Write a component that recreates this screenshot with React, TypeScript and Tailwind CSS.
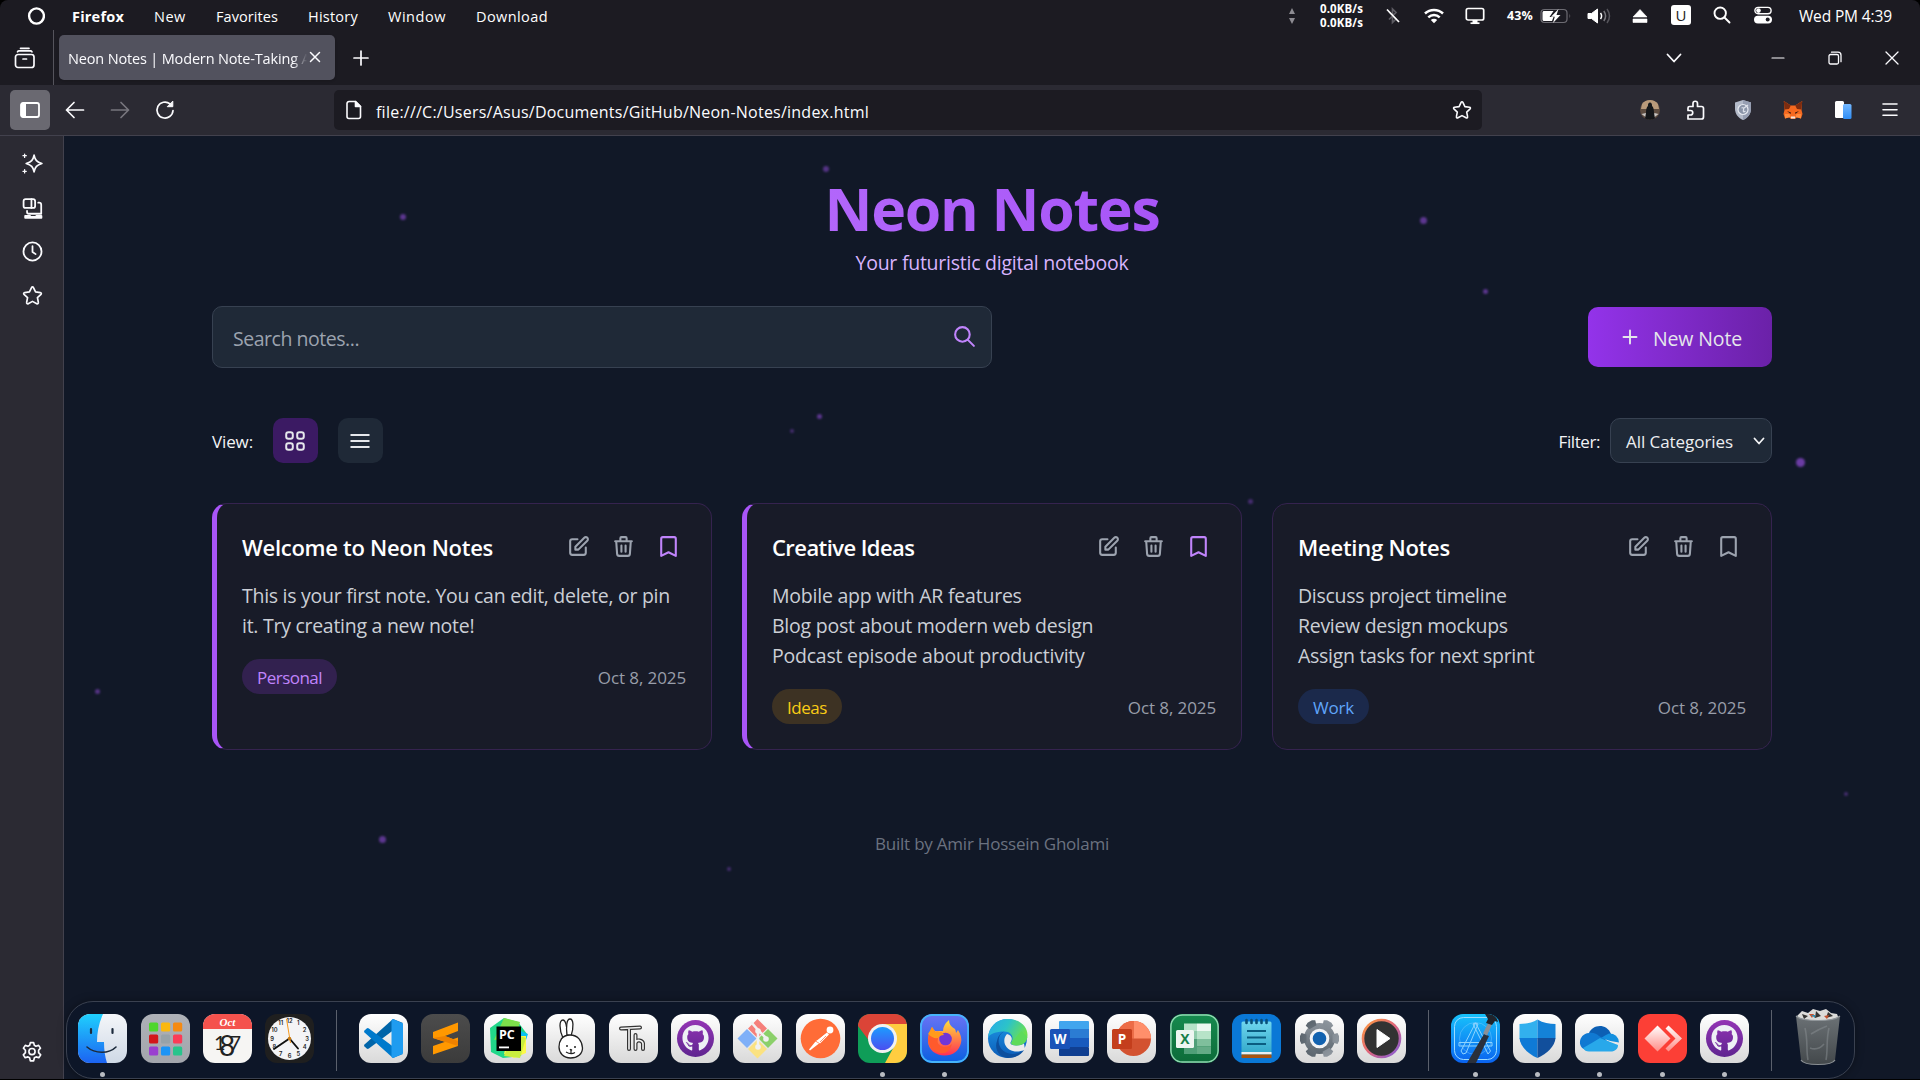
import type { ReactNode } from "react";
import { FaGithub } from "react-icons/fa";

/* ---------- shared icon wrapper ---------- */

function Line({
  children,
  size = 20,
  box = 20,
  width = 1.6,
  className = "",
}: {
  children: ReactNode;
  size?: number;
  box?: number;
  width?: number;
  className?: string;
}) {
  return (
    <svg
      width={size}
      height={size}
      viewBox={`0 0 ${box} ${box}`}
      fill="none"
      stroke="currentColor"
      strokeWidth={width}
      strokeLinecap="round"
      strokeLinejoin="round"
      className={`shrink-0 ${className}`}
    >
      {children}
    </svg>
  );
}

const STAR =
  "M10 1.8c.4 0 .7.2.9.6l2 4.2 4.6.6c.9.1 1.2 1.1.6 1.7l-3.4 3.2.9 4.6c.2.9-.7 1.5-1.5 1.1L10 15.6l-4.1 2.2c-.8.4-1.7-.2-1.5-1.1l.9-4.6L1.9 8.9c-.6-.6-.3-1.6.6-1.7l4.6-.6 2-4.2c.2-.4.5-.6.9-.6z";

/* ---------- system menu bar ---------- */

function MenuBar() {
  return (
    <div className="flex h-[30px] shrink-0 items-center pt-[2px] text-[14.5px] text-white">
      <svg width="18" height="20" viewBox="0 0 18 20" className="-mt-px ml-[27px]">
        <ellipse cx="9.5" cy="10" rx="7.4" ry="7.6" fill="none" stroke="#fff" strokeWidth="2.4" />
      </svg>
      <span className="ml-[27px] w-[82px] pt-px font-bold tracking-[0.015em]">Firefox</span>
      <span className="w-[62px] pt-px tracking-[0.035em]">New</span>
      <span className="w-[92px] pt-px tracking-[0.005em]">Favorites</span>
      <span className="w-[80px] pt-px tracking-[0.016em]">History</span>
      <span className="w-[88px] pt-px tracking-[0.037em]">Window</span>
      <span className="pt-px tracking-[0.028em]">Download</span>

      <div className="ml-auto flex h-full w-[640px] items-center">
        <div className="flex w-[23px] justify-center">
          <svg width="8" height="18" viewBox="0 0 8 18" fill="#8d8c92">
            <path d="M4 1l3 6H1zM4 17l3-6H1z" />
          </svg>
        </div>
        <div className="flex w-[77px] flex-col items-center text-[11.5px] leading-[14px] font-bold tracking-[0.01em]">
          <span>0.0KB/s</span>
          <span>0.0KB/s</span>
        </div>
        <div className="flex w-[26px] justify-center">
          <svg width="16" height="18" viewBox="0 0 16 18" fill="none" strokeWidth="1.7">
            <path d="M4 5l7 7-3.5 3.5V2L11 5.5 4 12.5" stroke="#5c5b62" />
            <path d="M2 2.5l12 12.5" stroke="#fff" />
          </svg>
        </div>
        <div className="flex w-[56px] justify-center">
          <svg width="20" height="16" viewBox="0 0 20 16" fill="none" stroke="#fff" strokeWidth="2.5">
            <path d="M1 5.5a13 13 0 0118 0M4.3 9.3a8.3 8.3 0 0111.4 0" />
            <path d="M10 15.2l-3.2-3.2a4.6 4.6 0 016.4 0z" fill="#fff" stroke="none" />
          </svg>
        </div>
        <div className="flex w-[26px] justify-center">
          <svg width="20" height="18" viewBox="0 0 20 18" fill="none" stroke="#fff" strokeWidth="1.7">
            <rect x="1.3" y="1.5" width="17.4" height="11.5" rx="1.8" />
            <path d="M10 13v3" strokeWidth="5" />
            <path d="M5.5 16.2h9" />
          </svg>
        </div>
        <span className="ml-[19px] text-[12.5px] font-bold tracking-[0.01em]">43%</span>
        <svg width="32" height="18" viewBox="0 0 32 18" className="-mt-px ml-[7px]">
          <rect x="1" y="2.5" width="26" height="13" rx="3.5" fill="none" stroke="#6d6c73" strokeWidth="1.2" />
          <path d="M4.5 4h9L9.5 10h4L12 14H4.5C3 14 2.5 13.5 2.5 12V6c0-1.5.5-2 2-2z" fill="#fff" />
          <path d="M18.5 2L11 9.8h3.8L13 16l7.5-8h-4z" fill="#fff" />
          <path d="M29.5 6.5q1.5 2.5 0 5z" fill="#6d6c73" />
        </svg>
        <svg width="25" height="18" viewBox="0 0 25 18" fill="none" strokeWidth="1.5" className="-mt-px ml-[15px]">
          <path d="M1 6.5h3.5L10.5 2v14l-6-4.5H1z" fill="#fff" stroke="#fff" strokeWidth="1" strokeLinejoin="round" />
          <path d="M13.5 6q2.2 3 0 6" stroke="#fff" />
          <path d="M16.8 4q3.6 5 0 10" stroke="#77767c" />
          <path d="M20 2q5 7 0 14" stroke="#55545b" />
        </svg>
        <svg width="16" height="16" viewBox="0 0 16 16" fill="#fff" className="-mt-px ml-[20px]">
          <path d="M8 1.5l7 7.5H1zM1 11h14v3.5H1z" stroke="#fff" strokeWidth=".6" strokeLinejoin="round" />
        </svg>
        <span className="-mt-[2px] ml-[23px] flex h-5 w-5 items-center justify-center rounded-[3px] bg-white text-[15px] leading-none text-[#1c1b22]">
          U
        </span>
        <Line size={18} box={18} width={1.9} className="-mt-[2px] ml-[22px]">
          <circle cx="7.2" cy="7.2" r="5.7" />
          <path d="M11.5 11.5l5 5" />
        </Line>
        <svg width="18" height="18" viewBox="0 0 18 18" className="-mt-[2px] ml-[23px]">
          <rect x=".9" y="1.4" width="16.2" height="6.4" rx="3.2" fill="none" stroke="#fff" strokeWidth="1.4" />
          <circle cx="4.5" cy="4.6" r="2.3" fill="#fff" />
          <rect x="0" y="9.7" width="18" height="7.8" rx="3.9" fill="#fff" />
          <circle cx="13.7" cy="13.6" r="2" fill="#1c1b22" />
        </svg>
        <span className="ml-[27px] pt-px text-[15.5px] tracking-[-0.009em] whitespace-nowrap">Wed PM 4:39</span>
      </div>
    </div>
  );
}

/* ---------- browser chrome ---------- */

function TabStrip() {
  return (
    <div className="flex h-[55px] shrink-0 items-center text-[#fbfbfe]">
      <div className="flex h-full w-[54px] items-center border-r border-[#55545c] pt-px pl-[14px]">
        <Line size={22} box={22} width={1.7}>
          <rect x="1.5" y="7.5" width="18.5" height="13" rx="2.5" />
          <path d="M3.5 4.8q.5-.9 1.5-.9h11.5q1 0 1.5.9M6.5 1.3h8.5M9 12h3.5" />
        </Line>
      </div>
      <div className="ml-[5px] flex h-[45px] w-[276px] items-center rounded-[5px] bg-[#52525e] pl-[9px] shadow-sm">
        <span className="w-[240px] overflow-hidden mask-[linear-gradient(to_right,#000_225px,transparent_239px)] pt-[2px] text-[14.5px] tracking-[-0.011em] whitespace-nowrap">
          Neon Notes | Modern Note-Taking App
        </span>
        <Line size={12} box={12} width={1.5} className="-mt-px ml-px">
          <path d="M1.5 1.5l9 9M10.5 1.5l-9 9" />
        </Line>
      </div>
      <Line size={16} box={16} width={1.7} className="mt-px ml-[18px]">
        <path d="M8 1v14M1 8h14" />
      </Line>
      <div className="ml-auto flex items-center pr-[21px]">
        <Line size={16} box={16} width={1.8}>
          <path d="M1.5 4.5L8 11.5l6.5-7" />
        </Line>
        <Line size={14} box={14} width={1.2} className="ml-[89px]">
          <path d="M1 7h12" />
        </Line>
        <Line size={14} box={14} width={1.3} className="ml-[43px]">
          <rect x="1" y="3.5" width="9.5" height="9.5" rx="1.5" />
          <path d="M3.5 1.2h6.500q3 0 3 3v6.500" />
        </Line>
        <Line size={14} box={14} width={1.3} className="ml-[43px]">
          <path d="M1 1l12 12M13 1L1 13" />
        </Line>
      </div>
    </div>
  );
}

function Toolbar() {
  return (
    <div className="flex h-[50px] shrink-0 items-center bg-[#2b2a33] text-[#fbfbfe]">
      <div className="ml-[10px] flex h-10 w-10 items-center justify-center rounded-[5px] bg-[#6a6971]">
        <svg width="20" height="16" viewBox="0 0 20 16">
          <rect x="1" y="1" width="18" height="14" rx="2" fill="none" stroke="#fff" strokeWidth="1.8" />
          <path d="M1 1h5v14H1z" fill="#fff" />
        </svg>
      </div>
      <Line size={20} className="ml-[15px]" width={1.7}>
        <path d="M18.500 10h-17M9 2.500L1.500 10 9 17.500" />
      </Line>
      <Line size={20} className="ml-[25px] text-[#77767e]" width={1.7}>
        <path d="M1.500 10h17M11 2.500l7.500 7.500-7.500 7.500" />
      </Line>
      <Line size={20} className="ml-[25px]" width={1.7}>
        <path d="M18 10.500a8 8 0 11-3-6.700" />
        <path d="M17.800 1.500v5.200h-5.200z" fill="currentColor" strokeWidth="1" />
      </Line>

      <div className="ml-[159px] flex h-10 w-[1148px] items-center rounded-[5px] bg-[#1c1b22] pr-[10px] pl-[10px]">
        <Line size={20} width={1.6}>
          <path d="M11.500 1.500H5a2 2 0 00-2 2v13a2 2 0 002 2h9.500a2 2 0 002-2v-10z" />
          <path d="M11.500 1.500v5h5z" fill="currentColor" />
        </Line>
        <span className="ml-[12px] pt-[3px] text-[16px] tracking-[0.0146em]">
          file:///C:/Users/Asus/Documents/GitHub/Neon-Notes/index.html
        </span>
        <Line size={20} width={1.6} className="ml-auto">
          <path d={STAR} />
        </Line>
      </div>

      <div className="ml-auto flex items-center pr-[20px]">
        <svg width="20" height="20" viewBox="0 0 20 20">
          <circle cx="10" cy="10" r="10" fill="#5d4c40" />
          <path d="M2 4a10 10 0 0116 0l1 5H1z" fill="#b99a7a" />
          <path d="M1.500 14L6 13l3 6.500zM18.500 14l-4-1-3 6.500z" fill="#c9c5c2" />
          <path d="M10 2.500c1.700 0 2.200 2 2 3.500 1.500 1 2 4 2 7l1 5.500q-5 2.500-10 0L6 13c0-3 .5-6 2-7-.2-1.500.3-3.500 2-3.500z" fill="#15171a" />
        </svg>
        <Line size={20} width={1.7} className="ml-[26px]">
          <path d="M2 19V15h2.500a2.200 2.200 0 000-4.500H2V8q0-1.500 1.500-1.500H7V3.500a2.200 2.200 0 014.500 0v3h4q2 0 2 2V17q0 2-2 2z" />
        </Line>
        <svg width="20" height="20" viewBox="0 0 20 20" className="ml-[27px]">
          <path d="M10 0l8 2.500V9c0 5-3.500 9-8 11-4.500-2-8-6-8-11V2.500z" fill="#b3bac9" />
          <path d="M10 0l8 2.500V9c0 5-3.500 9-8 11z" fill="#969eb2" />
          <circle cx="10" cy="9.500" r="5" fill="#8a94a8" stroke="#e6e9f0" strokeWidth="1.2" />
          <path d="M8.500 8q3-1 2 2t2 1M10.500 8.500L15 5" fill="none" stroke="#dfe3ec" strokeWidth="1.2" />
        </svg>
        <svg width="20" height="20" viewBox="0 0 20 20" className="ml-[30px]">
          <path d="M.8 1l7 4.500h4.400l7-4.500-.7 9 1 4-1.500 4.500-4-1.200-2.200 1.700H8.200L6 17.300 2 18.500.5 14l1-4z" fill="#f6691f" />
          <path d="M.8 1l7 4.500L6 9 1.500 9.500zM19.200 1l-7 4.500L14 9l4.500.5z" fill="#7c2c10" />
          <path d="M4 11l4 1.500-.5 1.500zM16 11l-4 1.500.5 1.500z" fill="#3a1a10" />
          <path d="M8 16.500h4l.3 2H7.700z" fill="#f1e6dc" />
          <path d="M2 14h4.500l1 3L2 18.500zM18 14h-4.500l-1 3 5.500 1.500z" fill="#ff8a3d" />
        </svg>
        <svg width="20" height="20" viewBox="0 0 20 20" className="ml-[30px]">
          <defs>
            <linearGradient id="pane" x1="0" y1="0" x2="0" y2="1">
              <stop offset="0" stopColor="#74b8ff" />
              <stop offset="1" stopColor="#2f8df5" />
            </linearGradient>
          </defs>
          <rect x="2" y="1" width="9" height="17" rx="1.5" fill="#fff" />
          <rect x="10" y="4" width="8.500" height="15" rx="1.5" fill="url(#pane)" />
        </svg>
        <Line size={20} width={1.6} className="ml-[27px]">
          <path d="M3 4h14M3 9.700h14M3 15.300h14" />
        </Line>
      </div>
    </div>
  );
}

function Sidebar() {
  return (
    <div className="flex w-[63px] shrink-0 flex-col items-center bg-[#2b2a33] pt-[17px] pb-[16px] pl-px text-[#fbfbfe]">
      <Line size={21} width={1.6}>
        <path d="M11.500 2c1 4.800 2.500 6.500 7.500 8-5 1.500-6.500 3.200-7.500 8-1-4.800-2.500-6.500-7.500-8 5-1.500 6.500-3.200 7.500-8z" />
        <path d="M2.500 1v3.200M.9 2.600h3.200M2.500 15.800V19M.9 17.400h3.200" strokeWidth="1.2" />
      </Line>
      <Line size={21} width={1.7} className="mt-[24px]">
        <rect x="1.500" y="1" width="11" height="8.500" rx="2" />
        <path d="M9 1v8.500M15.500 4.500h.800q2 0 2 2v8.500H6.500q-1.700 0-1.700-1.700v-1.100" />
        <path d="M3 18.800h15.500v-1.700h-4.800q-.5 1-1.500 1h-3q-1 0-1.500-1H3z" fill="currentColor" />
      </Line>
      <Line size={21} width={1.7} className="mt-[22px]">
        <circle cx="10" cy="10" r="8.600" />
        <path d="M10 5v5.500l3 2" />
      </Line>
      <Line size={21} width={1.6} className="mt-[23px]">
        <path d={STAR} />
      </Line>
      <Line size={22} width={1.5} className="mt-auto">
        <path d="M8.500 1.500h3l.6 2.400 1.500.8 2.400-.7 1.700 2.500L16 8.400v2.200l1.900 2-1.700 2.600-2.500-.8-1.500.9-.7 2.700h-3l-.7-2.700-1.500-.9-2.500.8-1.700-2.600 1.900-2V8.400L2.200 6.500 3.900 4l2.400.7 1.600-.8z" />
        <circle cx="10" cy="9.600" r="2.800" />
      </Line>
    </div>
  );
}

/* ---------- notes application ---------- */

const PARTICLES: string[] = [
  "left-[759px] top-[30px] size-[6px] opacity-45",
  "left-[336px] top-[78px] size-[6px] opacity-50",
  "left-[1356px] top-[81px] size-[7px] opacity-50",
  "left-[1419px] top-[153px] size-[5px] opacity-50",
  "left-[753px] top-[278px] size-[5px] opacity-50",
  "left-[726px] top-[293px] size-[4px] opacity-35",
  "left-[1732px] top-[322px] size-[9px] opacity-60",
  "left-[1184px] top-[363px] size-[5px] opacity-35",
  "left-[31px] top-[553px] size-[5px] opacity-45",
  "left-[1780px] top-[656px] size-[4px] opacity-35",
  "left-[315px] top-[700px] size-[7px] opacity-50",
  "left-[663px] top-[731px] size-[4px] opacity-35",
];

type Note = {
  title: string;
  titleClass: string;
  lines: string[];
  linesClass: string;
  tag: string;
  tagClass: string;
  pinned: boolean;
};

const NOTES: Note[] = [
  {
    title: "Welcome to Neon Notes",
    titleClass: "tracking-[-0.013em]",
    lines: ["This is your first note. You can edit, delete, or pin", "it. Try creating a new note!"],
    linesClass: "tracking-[-0.014em]",
    tag: "Personal",
    tagClass: "bg-[#32214f] text-[#c084fc] tracking-[-0.031em] w-[95px]",
    pinned: true,
  },
  {
    title: "Creative Ideas",
    titleClass: "tracking-[-0.026em]",
    lines: ["Mobile app with AR features", "Blog post about modern web design", "Podcast episode about productivity"],
    linesClass: "tracking-[-0.0115em]",
    tag: "Ideas",
    tagClass: "bg-[#3d3223] text-[#facc15] tracking-[-0.026em] w-[70px]",
    pinned: true,
  },
  {
    title: "Meeting Notes",
    titleClass: "tracking-[-0.011em]",
    lines: ["Discuss project timeline", "Review design mockups", "Assign tasks for next sprint"],
    linesClass: "tracking-[-0.0152em]",
    tag: "Work",
    tagClass: "bg-[#1b294b] text-[#60a5fa] tracking-[-0.012em] w-[71px]",
    pinned: false,
  },
];

function NoteCard({ note }: { note: Note }) {
  return (
    <article
      className={`h-[247px] rounded-[15px] border border-[#35234f] bg-[#181b28] p-[25px] ${
        note.pinned ? "border-l-[5px] border-l-[#a855f7]" : ""
      }`}
    >
      <div className="flex h-[35px] items-center justify-between">
        <h2 className={`pt-px text-[22px] font-semibold text-white ${note.titleClass}`}>{note.title}</h2>
        <div className="flex gap-[10px] text-[#9ca3af]">
          <button className="p-[5px]">
            <Line size={25} box={24} width={2}>
              <path d="M11 5H6a2 2 0 00-2 2v11a2 2 0 002 2h11a2 2 0 002-2v-5m-1.414-9.414a2 2 0 112.828 2.828L11.828 15H9v-2.828l8.586-8.586z" />
            </Line>
          </button>
          <button className="p-[5px]">
            <Line size={25} box={24} width={2}>
              <path d="M19 7l-.867 12.142A2 2 0 0116.138 21H7.862a2 2 0 01-1.995-1.858L5 7m5 4v6m4-6v6m1-10V4a1 1 0 00-1-1h-4a1 1 0 00-1 1v3M4 7h16" />
            </Line>
          </button>
          <button className={`p-[5px] ${note.pinned ? "text-[#c084fc]" : ""}`}>
            <Line size={25} box={24} width={2}>
              <path d="M5 4.500a1.500 1.500 0 011.500-1.500h11a1.500 1.500 0 011.500 1.500V21l-7-3.500L5 21z" />
            </Line>
          </button>
        </div>
      </div>
      <div className={`mt-[17px] -mb-[2px] text-[19.5px] leading-[30px] whitespace-nowrap text-[#cbcfd6] ${note.linesClass}`}>
        {note.lines.map((line) => (
          <p key={line}>{line}</p>
        ))}
      </div>
      <div className="mt-5 flex items-center justify-between text-[17px]">
        <span className={`flex h-[35px] items-center justify-center rounded-full pt-[3px] ${note.tagClass}`}>{note.tag}</span>
        <span className="pt-[3px] tracking-[-0.006em] text-[#989eaa]">Oct 8, 2025</span>
      </div>
    </article>
  );
}

function NotesApp() {
  return (
    <main className="relative min-w-0 flex-1 overflow-hidden border-l border-[#42414d] bg-[#111827]">
      {PARTICLES.map((place) => (
        <span key={place} className={`absolute rounded-full bg-[#a855f7] blur-[1.2px] ${place}`} />
      ))}
      <div className="mx-auto w-[1560px]">
        <header className="flex flex-col items-center pt-[42px]">
          <h1 className="bg-linear-to-r from-[#b266fb] to-[#a855f7] bg-clip-text text-[59px] leading-[60px] font-bold tracking-[-0.0215em] text-transparent">
            Neon Notes
          </h1>
          <p className="mt-[10px] text-[19.5px] leading-[30px] tracking-[-0.0126em] text-[#d8b4fe]">
            Your futuristic digital notebook
          </p>
        </header>

        <div className="mt-[28px] flex h-[62px] items-center justify-between">
          <div className="flex h-[62px] w-[780px] items-center justify-between rounded-[10px] border border-[#374151] bg-[#1f2937] pr-[14px] pl-[20px]">
            <span className="pt-[4px] text-[19.5px] tracking-[-0.024em] text-[#9ca3af]">Search notes...</span>
            <Line size={25} box={24} width={2} className="-mt-px text-[#c084fc]">
              <path d="M21 21l-6-6m2-5a7 7 0 11-14 0 7 7 0 0114 0z" />
            </Line>
          </div>
          <button className="flex h-[60px] w-[184px] items-center rounded-[10px] bg-linear-to-r from-[#9333ea] to-[#6b21a8] pl-[34px] text-[#e5e7eb]">
            <Line size={16} box={16} width={1.9}>
              <path d="M8 1.500v13M1.500 8h13" />
            </Line>
            <span className="ml-[15px] pt-[4px] text-[19.5px] tracking-[-0.007em]">New Note</span>
          </button>
        </div>

        <div className="mt-[50px] flex h-[45px] items-center text-[17px] text-[#f3f4f6]">
          <span className="w-[61px] pt-[3px] tracking-[-0.007em]">View:</span>
          <button className="flex size-[45px] items-center justify-center rounded-[10px] bg-[#3b1a63]">
            <Line size={20} box={20} width={2} className="-ml-px text-[#e5e7eb]">
              <rect x="1.200" y="1.200" width="6.600" height="6.600" rx="2.200" />
              <rect x="12.200" y="1.200" width="6.600" height="6.600" rx="2.200" />
              <rect x="1.200" y="12.200" width="6.600" height="6.600" rx="2.200" />
              <rect x="12.200" y="12.200" width="6.600" height="6.600" rx="2.200" />
            </Line>
          </button>
          <button className="ml-5 flex size-[45px] items-center justify-center rounded-[10px] bg-[#1f2937]">
            <Line size={20} box={20} width={1.9} className="-ml-px text-[#e5e7eb]">
              <path d="M1.200 4h17.600M1.200 10h17.600M1.200 16h17.600" />
            </Line>
          </button>
          <span className="ml-auto pt-[3px] tracking-[-0.025em]">Filter:</span>
          <div className="ml-[10px] flex h-[45px] w-[162px] items-center justify-between rounded-[10px] border border-[#374151] bg-[#1f2937] pr-[6px] pl-[15px]">
            <span className="pt-[3px] tracking-[-0.003em] text-[#eceef1]">All Categories</span>
            <Line size={12} box={12} width={1.8}>
              <path d="M1.500 3.500L6 8.500l4.500-5" />
            </Line>
          </div>
        </div>

        <section className="mt-10 grid grid-cols-3 gap-[30px]">
          {NOTES.map((n) => (
            <NoteCard key={n.title} note={n} />
          ))}
        </section>

        <footer className="mt-20 pt-px text-center text-[17px] leading-[25px] tracking-[-0.013em] text-[#6b7280]">
          Built by Amir Hossein Gholami
        </footer>
      </div>
    </main>
  );
}

/* ---------- dock ---------- */

function Tile({ bg = "url(#tile)", children }: { bg?: string; children: ReactNode }) {
  return (
    <svg width="49" height="49" viewBox="0 0 49 49" className="overflow-hidden rounded-[12px]">
      <rect width="49" height="49" fill={bg} />
      {children}
    </svg>
  );
}

function Gradients() {
  const defs: [string, string, string][] = [
    ["tile", "#ffffff", "#d9d9d9"],
    ["finder", "#1fd0fd", "#1c63f2"],
    ["face", "#f4f6f9", "#cfd9e6"],
    ["pad", "#aeb1b7", "#a3a6ad"],
    ["chromeBall", "#1c9cff", "#4a4ff0"],
    ["ffBg", "#6b73f5", "#0a5fe0"],
    ["fox", "#ffe03a", "#ff2f55"],
    ["xcode", "#17c2fb", "#0a63f0"],
    ["desk", "#ffffff", "#ff8c86"],
    ["can", "#6b7175", "#43484b"],
    ["excel", "#168a4e", "#0c6b39"],
    ["note", "#6fd6ee", "#2fa6c8"],
    ["gh", "#9334b4", "#5f2590"],
    ["dark", "#4c4c4c", "#3b3b3b"],
    ["edge", "#1f9ae8", "#0b5cb8"],
    ["gear", "#8d959d", "#5c666f"],
  ];
  return (
    <svg width="0" height="0" className="absolute">
      <defs>
        {defs.map(([id, a, b]) => (
          <linearGradient key={id} id={id} x1="0" y1="0" x2="0" y2="1">
            <stop offset="0" stopColor={a} />
            <stop offset="1" stopColor={b} />
          </linearGradient>
        ))}
        <linearGradient id="edgeTop" x1="0" y1="0" x2="1" y2=".4">
          <stop offset="0" stopColor="#28a8ea" />
          <stop offset=".5" stopColor="#2cc3c9" />
          <stop offset="1" stopColor="#6be04e" />
        </linearGradient>
        <linearGradient id="ring" x1="0" y1="0" x2="1" y2="1">
          <stop offset="0" stopColor="#ff9b3d" />
          <stop offset=".5" stopColor="#e0667a" />
          <stop offset="1" stopColor="#7c5be0" />
        </linearGradient>
      </defs>
    </svg>
  );
}

function Finder() {
  return (
    <Tile bg="url(#face)">
      <path d="M0 0h25c-4 9-6 18-6 28h7c0 8 1 15 3 21H0z" fill="url(#finder)" />
      <path d="M13 15v4M34.500 15v4" stroke="#1d2b3c" strokeWidth="2.2" strokeLinecap="round" />
      <path d="M9 33c8 7 22 7 29 0" fill="none" stroke="#1d2b3c" strokeWidth="1.6" strokeLinecap="round" />
    </Tile>
  );
}

const PAD_COLORS = ["#4fd62c", "#fbb80f", "#f58a12", "#d3171b", "#98a2a8", "#fb3b57", "#9a3fd0", "#1c94f5", "#28c48c"];

function Launchpad() {
  return (
    <Tile bg="url(#pad)">
      {PAD_COLORS.map((c, i) => (
        <rect key={c} x={8 + (i % 3) * 12} y={8.5 + Math.floor(i / 3) * 12} width="9.2" height="9" rx="1.5" fill={c} />
      ))}
    </Tile>
  );
}

function Calendar() {
  return (
    <Tile bg="#f6f5f3">
      <rect width="49" height="15" fill="#f4524d" />
      <text x="24.5" y="11.5" textAnchor="middle" fontFamily="Liberation Serif" fontStyle="italic" fontWeight="700" fontSize="11" fill="#fff">
        Oct
      </text>
      <text x="11" y="36" fontFamily="Lato" fontSize="20" fill="#222" textLength="27">
        17
      </text>
      <text x="24" y="42" textAnchor="middle" fontFamily="Lato" fontSize="28" fill="#222">
        8
      </text>
    </Tile>
  );
}

function Clock() {
  const hours = [12, 1, 2, 3, 4, 5, 6, 7, 8, 9, 10, 11];
  return (
    <Tile bg="#1f1f1f">
      <circle cx="24.5" cy="24.5" r="21.5" fill="#f4f4f6" />
      {hours.map((h, i) => {
        const a = (i * Math.PI) / 6;
        return (
          <text
            key={h}
            x={24.5 + Math.sin(a) * 17.5}
            y={26.5 - Math.cos(a) * 17.5}
            textAnchor="middle"
            fontFamily="Inter"
            fontWeight="600"
            fontSize="5.8"
            fill="#222"
          >
            {h}
          </text>
        );
      })}
      <path d="M24.500 24.500l8.500 10M24.500 24.500L9 35" stroke="#111" strokeWidth="1.9" strokeLinecap="round" />
      <path d="M25.500 29L21.500 5" stroke="#f79a1e" strokeWidth="1" />
      <circle cx="24.5" cy="24.5" r="1.8" fill="#c77a12" />
    </Tile>
  );
}

function VsCode() {
  return (
    <Tile>
      <path d="M34 5L5.500 30.500q-1 1 0 2l2.200 2q1 .8 2.200 0L44 9z" fill="#0065a9" />
      <path d="M34 44L5.500 18.500q-1-1 0-2l2.200-2q1-.8 2.200 0L44 40z" fill="#007acc" />
      <path d="M34 5l10 4.500v30L34 44l-1.500-1V6z" fill="#1f9cf0" />
    </Tile>
  );
}

function Sublime() {
  return (
    <Tile bg="url(#dark)">
      <path d="M12 18l25-9.500V17l-13 5 13 5v5L12 24z" fill="#ff9800" />
      <path d="M37 23.500V32L12 40.500V32l13-4.500z" fill="#ff9800" />
      <path d="M12 24l25 8v-5l-13-5z" fill="#ee8100" />
    </Tile>
  );
}

function PyCharm() {
  return (
    <Tile>
      <path d="M6 14L20 4l14 4 9 12-6 22-18 2L7 38z" fill="#21d789" />
      <path d="M20 4l16 4-4 14-22 4z" fill="#7de04a" />
      <path d="M34 16l10 4-4 12-8-2z" fill="#07c3f2" />
      <path d="M24 22h18v17l-12 5-10-4z" fill="#fcf84a" />
      <path d="M30 20l12 4-6 20-16-2z" fill="#c9ee3f" />
      <rect x="12.5" y="12.5" width="24.5" height="24.5" fill="#000" />
      <text x="15" y="24.5" fontFamily="Open Sans" fontWeight="700" fontSize="12.5" fill="#fff">
        PC
      </text>
      <rect x="15" y="32.5" width="10" height="1.8" fill="#fff" />
    </Tile>
  );
}

function Rabbit() {
  return (
    <Tile>
      <g fill="#fff" stroke="#222" strokeWidth="1.3" strokeLinejoin="round">
        <path d="M17 24C13 15 13 6 17 6c3 0 4 7 4.500 15z" />
        <path d="M21 21c-1-8-.5-16 3-16s4 8 1 17z" />
        <path d="M24 21c8 0 12 6 12.500 13 0 6-5 10-12 10S13 39 13 33s3-12 11-12z" />
      </g>
      <circle cx="21" cy="32" r="1" fill="#222" />
      <circle cx="29" cy="33" r="1" fill="#222" />
      <path d="M20 38q5 3 9 .5M24 35l1 1.500 1-1M25 37v3" stroke="#222" strokeWidth="1.2" fill="none" />
    </Tile>
  );
}

function Thonny() {
  return (
    <Tile>
      <g fill="none" strokeLinecap="round" strokeLinejoin="round">
        <path d="M12 14.500l19-1M20 14.500V35M26.500 21v14M26.500 29q1-3 4-2.500t3.500 3V35" stroke="#333" strokeWidth="4" />
        <path d="M12 14.500l19-1M20 14.500V35M26.500 21v14M26.500 29q1-3 4-2.500t3.500 3V35" stroke="#f4f4f4" strokeWidth="1.6" />
      </g>
    </Tile>
  );
}

function GitHub() {
  return (
    <Tile>
      <circle cx="24.5" cy="24.5" r="18.5" fill="url(#gh)" />
      <FaGithub x={11} y={10.5} width={27} height={27} size={27} color="#eef0f5" />
    </Tile>
  );
}

function Git() {
  return (
    <Tile>
      <path d="M24.500 5l9.500 9.500-9.500 9.500-9.500-9.500z" fill="#f57f7a" />
      <path d="M35 15l9.500 9.500L35 34l-9.500-9.500z" fill="#8bd06a" />
      <path d="M14 15l9.500 9.500L14 34l-9.500-9.500z" fill="#7fb0f8" />
      <path d="M24.500 25.500l9.500 9.500-9.500 9.500-9.500-9.500z" fill="#fbe281" />
      <path d="M18 8l7 8v17M25 16l8 8" stroke="#f1f1f1" strokeWidth="2.6" fill="none" />
      <circle cx="25" cy="17" r="2.8" fill="#f1f1f1" />
      <circle cx="33" cy="25" r="2.8" fill="#f1f1f1" />
      <circle cx="25" cy="33" r="2.8" fill="#f1f1f1" />
    </Tile>
  );
}

function Postman() {
  return (
    <Tile>
      <circle cx="24.5" cy="24.5" r="19.8" fill="#ff6c37" />
      <circle cx="34" cy="16" r="3.4" fill="#fff" />
      <path d="M31 18.500l2 2-9 9-4-2.500zM19.500 27.500l3.500 2-9 7-1-1z" fill="#fff" />
      <path d="M28 20l-7 6M30 22l-6 6" stroke="#ff6c37" strokeWidth=".7" />
    </Tile>
  );
}

function Chrome() {
  return (
    <Tile bg="#0f9d58">
      <path d="M0 0h49v10H24L12 28 0 12z" fill="#db4437" />
      <path d="M24 10h25v39H27l11-20z" fill="#ffcd40" />
      <circle cx="24.5" cy="24.5" r="14.5" fill="#f1f1f1" />
      <circle cx="24.5" cy="24.5" r="11.5" fill="url(#chromeBall)" />
    </Tile>
  );
}

function Firefox() {
  return (
    <Tile bg="url(#ffBg)">
      <rect x="1" y="1" width="47" height="47" rx="11" fill="none" stroke="#46b4fa" strokeWidth="1.8" />
      <path d="M12 13l3 4 8 0q0-6 6-11 0 6 6 9 1 2 1 4l2-3c3 5 4 9 3 13-2 8-8 12.500-16.500 12.500S8 36 8 27c0-6 2-9 4-14z" fill="url(#fox)" />
      <path d="M8 27c0-6 2-9 4-14l3 5q5-1 9 2-5 1-6 4-2 8 6 9 5 0 8-3-3 11-13 9Q9 36 8 27z" fill="#ff5a2c" />
      <circle cx="25.5" cy="25" r="6.3" fill="#7036d8" />
      <path d="M8 20q2-3 4-7l3 5q7-1 9 3-4 0-6 3-5 1-10-4z" fill="#ff9a1c" />
    </Tile>
  );
}

function Edge() {
  return (
    <Tile>
      <circle cx="24.5" cy="24.5" r="19.5" fill="url(#edge)" />
      <path d="M5 24C6 12 14 5 25 5c11 0 19.500 7 19.500 16 0 7-5 10.500-11 10.500-5 0-6.500-2-5-4 3-5-1-10-7-10C13 17.500 6 20 5 24z" fill="url(#edgeTop)" />
      <path d="M21 17.500c-6 3-7 11-3 17 5 7 16 7 23.500 1C37 42 31 44 25 44c-9-1-14-9-11-17 1-5 4-8.500 7-9.500z" fill="#0c4f9e" />
      <path d="M24 20c4 1 6 4 4 7.500-1.500 2 0 4 5 4 4 0 6.500-1 8-2l1 6c-8 4-17 2-20-5-1.500-4-.5-8 2-10.500z" fill="#ebebeb" />
      <path d="M29 28c-1 2 1 3.500 5 3.500 5 0 9.500-3 10.300-8.500l-6-6z" fill="#5ddb5a" />
    </Tile>
  );
}

function Word() {
  return (
    <Tile>
      <rect x="14" y="7" width="30" height="9" rx="1" fill="#41a5ee" />
      <path d="M14 15h30v9H14z" fill="#2b7cd3" />
      <path d="M14 24h30v9H14z" fill="#185abd" />
      <rect x="14" y="33" width="30" height="9" rx="1" fill="#103f91" />
      <rect x="5" y="15" width="20" height="20" rx="1.5" fill="#1a53b8" />
      <text x="15" y="29.5" textAnchor="middle" fontFamily="Open Sans" fontWeight="700" fontSize="13.5" fill="#fff">
        W
      </text>
    </Tile>
  );
}

function PowerPoint() {
  return (
    <Tile>
      <circle cx="26.5" cy="24.5" r="17.5" fill="#d35230" />
      <path d="M26.500 7v17.500H44A17.500 17.500 0 0026.500 7z" fill="#ff8f6b" />
      <path d="M26.500 7v17.500H9A17.500 17.500 0 0126.500 7z" fill="#ed6c47" />
      <rect x="5" y="15" width="20" height="20" rx="1.5" fill="#c43e1c" />
      <text x="15" y="29.5" textAnchor="middle" fontFamily="Open Sans" fontWeight="700" fontSize="13.5" fill="#fff">
        P
      </text>
    </Tile>
  );
}

function Excel() {
  return (
    <Tile bg="url(#excel)">
      <rect x=".9" y=".9" width="47.2" height="47.2" rx="11.5" fill="none" stroke="#8fd6b0" strokeWidth="1.5" />
      <path d="M14 9.500h13v8H14zM27 17h14v8H27z" fill="#b7e3c8" />
      <path d="M27 9.500h14V17H27z" fill="#ecf8f0" />
      <path d="M14 17h13v8H14z" fill="#8fcbaa" />
      <path d="M14 25h13v15H14z" fill="#4f9f78" />
      <path d="M27 25h14v7.500H27z" fill="#7fbf9c" />
      <path d="M27 32.500h14V40H27z" fill="#64ab86" />
      <rect x="6" y="16" width="18" height="18" rx="1.5" fill="#eef6f1" />
      <text x="15" y="30" textAnchor="middle" fontFamily="Open Sans" fontWeight="700" fontSize="14" fill="#18804a">
        X
      </text>
    </Tile>
  );
}

function Notepad() {
  return (
    <Tile bg="#0a78d6">
      <rect x="9.5" y="7.5" width="30" height="34" rx="1.5" fill="url(#note)" />
      <path d="M9.500 38h30v2.500h-30z" fill="#e9eef0" />
      <path d="M9.500 40.500h30V44h-30z" fill="#a85410" />
      <path d="M15 17h19M15 23.500h19M15 30h19" stroke="#0a5c80" strokeWidth="2.2" />
      <path d="M14.500 6v3M19.500 6v3M24.500 6v3M29.500 6v3M34.500 6v3" stroke="#0a4f78" strokeWidth="2.6" strokeLinecap="round" />
    </Tile>
  );
}

function Settings() {
  return (
    <Tile>
      <g fill="url(#gear)">
        <circle cx="24.5" cy="24.5" r="15.5" />
        {[30, 90, 150].map((a) => (
          <path
            key={a}
            d="M19 42.500l1.500-5h8l1.500 5-3 1.500h-5zM19 6.500l1.500 5h8l1.500-5-3-1.500h-5z"
            transform={`rotate(${a} 24.5 24.5)`}
          />
        ))}
      </g>
      <circle cx="24.5" cy="24.5" r="8.3" fill="#1262b0" stroke="#f3f4f6" strokeWidth="3" />
    </Tile>
  );
}

function Player() {
  return (
    <Tile>
      <circle cx="24.5" cy="24.5" r="18.5" fill="#333" stroke="url(#ring)" strokeWidth="2.6" />
      <path d="M20 15.500v18l13-9z" fill="#fff" stroke="#fff" strokeWidth="1" strokeLinejoin="round" />
    </Tile>
  );
}

function Xcode() {
  return (
    <Tile bg="url(#xcode)">
      <rect x="3.5" y="3.5" width="42" height="42" rx="9" fill="none" stroke="#9bdcff" strokeWidth="1" />
      <g fill="none" stroke="#8ed3ff" strokeWidth="1">
        <circle cx="24.5" cy="24.5" r="16" opacity=".4" />
        <path d="M22 10l2.500-1 15 28-2.500 3zM27 10l-2.500-1L10 37l2 3 3-1zM8 28.500h33v3.500H8z" />
      </g>
      <path d="M33 20l5 2-13 27h-9z" fill="#2a303c" />
      <path d="M37 9l4 1.500-5 11-4-2z" fill="#8b9097" />
      <path d="M34 0c6-1 12 2 13 8l-3-1-3 4-6-2 2-4z" fill="#20242c" />
    </Tile>
  );
}

function Defender() {
  return (
    <Tile>
      <path d="M24.500 5.500C19 9 12.500 10 6.500 10v14.500h18z" fill="#32b0ee" />
      <path d="M24.500 5.500C30 9 36.500 10 42.500 10v14.500h-18z" fill="#1482d8" />
      <path d="M6.500 24h18v20C15 40 7 32 6.500 24z" fill="#0f7ad6" />
      <path d="M42.500 24h-18v20c9.500-4 17.500-12 18-20z" fill="#124f9c" />
    </Tile>
  );
}

function OneDrive() {
  return (
    <Tile>
      <path d="M14 19c3-8 17-11 22 1l-10 10z" fill="#0c5fb4" />
      <path d="M14 36C2 37 2 20 14 19c4-1 8 1 10 3l10 6-8 9z" fill="#1079d2" />
      <path d="M26 24q4-3 8-4.500 9 0 10 9-9-1-18-4.500z" fill="#1490df" />
      <path d="M8 34q9-5 17-10l18 7c0 4-3 6-6 6.500H14q-4 0-6-3.500z" fill="#28a8ea" />
    </Tile>
  );
}

function AnyDesk() {
  return (
    <Tile bg="#fc3f36">
      <path d="M19.500 11.500l13 13-13 13-13-13z" fill="url(#desk)" />
      <path d="M27.500 14.500l3-3 13.500 13-13.500 13-3-3 10-10z" fill="url(#desk)" />
    </Tile>
  );
}

function Trash() {
  return (
    <svg width="46" height="58" viewBox="0 0 46 58">
      <path d="M2 8l5-5 6 2 5-4 7 2 6-2 5 4 6 1 2 5-8 5H10z" fill="#dcdcda" />
      <path d="M7 6l6 2-4 3zM21 3l5 5-6 2zM33 4l5 4-7 2z" fill="#343432" />
      <path d="M14 6h5l-2 4zM29 8l5-1-2 4z" fill="#c4522f" />
      <path d="M16 7h4v3z" fill="#2c8db0" />
      <path d="M1 8c7 6 37 6 44 0l-5 44c-3 6-31 6-34 0z" fill="url(#can)" />
      <path d="M10 20c3 12 1 22 3 32M34 20c-3 12-1 22-3 32M16 26q8-5 16-8M15 40q8 3 14-4" stroke="#8a9094" strokeWidth="1.6" fill="none" opacity=".5" />
      <path d="M1 8c7 6 37 6 44 0" fill="none" stroke="#90969a" strokeWidth="1.2" />
      <path d="M6 52c3 6 31 6 34 0" fill="none" stroke="#8a8f93" strokeWidth="1.2" />
    </svg>
  );
}

type DockItem = { icon: ReactNode; open?: boolean };

const LEFT: DockItem[] = [{ icon: <Finder />, open: true }, { icon: <Launchpad /> }, { icon: <Calendar /> }, { icon: <Clock /> }];

const MIDDLE: DockItem[] = [
  { icon: <VsCode /> },
  { icon: <Sublime /> },
  { icon: <PyCharm /> },
  { icon: <Rabbit /> },
  { icon: <Thonny /> },
  { icon: <GitHub /> },
  { icon: <Git /> },
  { icon: <Postman /> },
  { icon: <Chrome />, open: true },
  { icon: <Firefox />, open: true },
  { icon: <Edge /> },
  { icon: <Word /> },
  { icon: <PowerPoint /> },
  { icon: <Excel /> },
  { icon: <Notepad /> },
  { icon: <Settings /> },
  { icon: <Player /> },
];

const RIGHT: DockItem[] = [
  { icon: <Xcode />, open: true },
  { icon: <Defender />, open: true },
  { icon: <OneDrive />, open: true },
  { icon: <AnyDesk />, open: true },
  { icon: <GitHub />, open: true },
];

function DockGroup({ items }: { items: DockItem[] }) {
  return (
    <div className="flex">
      {items.map((item, i) => (
        <div key={i} className="flex w-[62.36px] flex-col items-center pt-[12px]">
          {item.icon}
          {item.open && <span className="mt-[9px] size-[5px] rounded-full bg-[#b9bcc2]" />}
        </div>
      ))}
    </div>
  );
}

function DockRule() {
  return (
    <div className="flex w-[31.5px] justify-center pt-[8px]">
      <span className="h-[61px] w-px bg-[#5a606c]" />
    </div>
  );
}

function Dock() {
  return (
    <div className="absolute bottom-0 left-[66px] flex h-[78px] w-[1789px] rounded-[27px] border border-[#3a4150] bg-[#0d1628] pl-[4.5px] shadow-[0_0_8px_rgba(0,0,0,0.35)]">
      <Gradients />
      <DockGroup items={LEFT} />
      <DockRule />
      <DockGroup items={MIDDLE} />
      <DockRule />
      <DockGroup items={RIGHT} />
      <DockRule />
      <div className="ml-[8px] pt-[6px]">
        <Trash />
      </div>
    </div>
  );
}

/* ---------- screen ---------- */

export default function App() {
  return (
    <div className="h-[1080px] w-[1920px] overflow-hidden bg-black font-['Open_Sans','Noto_Sans',sans-serif]">
      <div className="relative flex h-[1080px] flex-col overflow-hidden rounded-t-[8px] border-b border-black bg-[#1c1b22]">
        <MenuBar />
        <TabStrip />
        <Toolbar />
        <div className="h-px shrink-0 bg-[#42414d]" />
        <div className="flex min-h-0 flex-1">
          <Sidebar />
          <NotesApp />
        </div>
        <Dock />
      </div>
    </div>
  );
}
